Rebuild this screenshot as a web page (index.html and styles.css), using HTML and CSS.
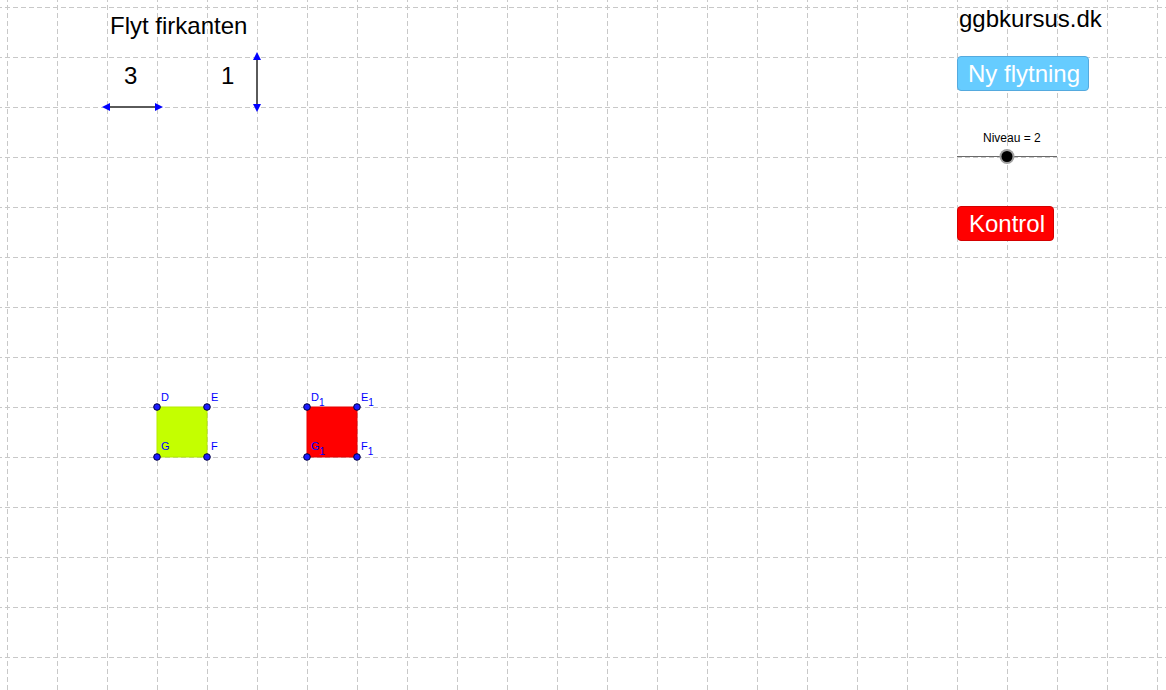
FILE: index.html
```html
<!DOCTYPE html>
<html>
<head>
<meta charset="utf-8">
<link rel="stylesheet" href="styles.css">
</head>
<body>
<div class="stage">
  <svg class="canvas" width="1166" height="690" viewBox="0 0 1166 690" xmlns="http://www.w3.org/2000/svg">
    <g id="grid" stroke="#c8c8c8" stroke-width="1" stroke-dasharray="5 3" fill="none"></g>
    <!-- arrows -->
    <g>
      <line x1="107" y1="107" x2="157" y2="107" stroke="#5a5a5a" stroke-width="2"/>
      <polygon points="102,107 110,103 110,111" fill="#0000ff"/>
      <polygon points="163,107 155,103 155,111" fill="#0000ff"/>
      <line x1="257" y1="57" x2="257" y2="107" stroke="#5a5a5a" stroke-width="2"/>
      <polygon points="257,52 253,60 261,60" fill="#0000ff"/>
      <polygon points="257,112 253,104 261,104" fill="#0000ff"/>
    </g>
    <!-- squares -->
    <rect x="157" y="407" width="50" height="50" fill="#c4ff00" stroke="#b5ec00" stroke-width="1"/>
    <rect x="307" y="407" width="50" height="50" fill="#ff0000" stroke="#e60000" stroke-width="1"/>
    <g fill="#1b1bff" stroke="#000040" stroke-width="1">
      <circle cx="157" cy="407" r="3.3"/>
      <circle cx="207" cy="407" r="3.3"/>
      <circle cx="207" cy="457" r="3.3"/>
      <circle cx="157" cy="457" r="3.3"/>
      <circle cx="307" cy="407" r="3.3"/>
      <circle cx="357" cy="407" r="3.3"/>
      <circle cx="357" cy="457" r="3.3"/>
      <circle cx="307" cy="457" r="3.3"/>
    </g>
    <g class="plabel" fill="#0000ff">
      <text x="161" y="401">D</text>
      <text x="211" y="401">E</text>
      <text x="161" y="450">G</text>
      <text x="211" y="450">F</text>
      <text x="311" y="401">D<tspan class="sub" dy="5">1</tspan></text>
      <text x="361" y="401">E<tspan class="sub" dy="5">1</tspan></text>
      <text x="311" y="450">G<tspan class="sub" dy="5">1</tspan></text>
      <text x="361" y="450">F<tspan class="sub" dy="5">1</tspan></text>
    </g>
    <!-- slider -->
    <line x1="957" y1="156.5" x2="1057" y2="156.5" stroke="#6a6a6a" stroke-width="1"/>
    <circle cx="1007" cy="156.5" r="7.5" fill="#a0a0a0"/>
    <circle cx="1007" cy="156.5" r="5.5" fill="#000"/>
  </svg>

  <div class="title">Flyt firkanten</div>
  <div class="num num-x">3</div>
  <div class="num num-y">1</div>
  <div class="site">ggbkursus.dk</div>
  <button class="btn btn-new">Ny flytning</button>
  <div class="slider-label">Niveau = 2</div>
  <button class="btn btn-check">Kontrol</button>
</div>
<script>
(function(){
  var g = document.getElementById('grid');
  var ns = 'http://www.w3.org/2000/svg';
  for (var y = 7.5; y < 690; y += 50) {
    var l = document.createElementNS(ns, 'line');
    l.setAttribute('x1', 0); l.setAttribute('x2', 1166);
    l.setAttribute('y1', y); l.setAttribute('y2', y);
    l.setAttribute('stroke-dashoffset', '3');
    g.appendChild(l);
  }
  for (var x = 7.5; x < 1166; x += 50) {
    var v = document.createElementNS(ns, 'line');
    v.setAttribute('y1', 0); v.setAttribute('y2', 690);
    v.setAttribute('x1', x); v.setAttribute('x2', x);
    v.setAttribute('stroke-dashoffset', '3');
    g.appendChild(v);
  }
})();
</script>
</body>
</html>
```

FILE: styles.css
```css
html, body {
  margin: 0;
  padding: 0;
  background: #ffffff;
  overflow: hidden;
}

.stage {
  position: relative;
  width: 1166px;
  height: 690px;
  font-family: "Liberation Sans", Arial, sans-serif;
  color: #000;
}

.canvas {
  position: absolute;
  left: 0;
  top: 0;
  display: block;
}

.plabel {
  font-family: "Liberation Sans", Arial, sans-serif;
  font-size: 11px;
}

.plabel .sub {
  font-size: 10px;
}

.title,
.num,
.site,
.slider-label {
  position: absolute;
  white-space: nowrap;
  line-height: 1;
}

.title {
  left: 110px;
  top: 14px;
  font-size: 24px;
}

.num {
  font-size: 24px;
  top: 64px;
}

.num-x { left: 124px; }
.num-y { left: 221px; }

.site {
  left: 959px;
  top: 7px;
  font-size: 24px;
}

.slider-label {
  left: 983px;
  top: 132px;
  font-size: 12px;
}

.btn {
  position: absolute;
  left: 957px;
  margin: 0;
  padding: 0 0 0 10px;
  text-align: left;
  font-family: "Liberation Sans", Arial, sans-serif;
  font-size: 24px;
  line-height: 32px;
  color: #ffffff;
  border-radius: 4px;
  box-sizing: border-box;
  height: 35px;
  cursor: pointer;
}

.btn-new {
  top: 56px;
  width: 132px;
  background: #66ccff;
  border: 1px solid #55aade;
}

.btn-check {
  top: 206px;
  width: 97px;
  background: #ff0000;
  border: 1px solid #d40000;
  padding-left: 11px;
}
```
